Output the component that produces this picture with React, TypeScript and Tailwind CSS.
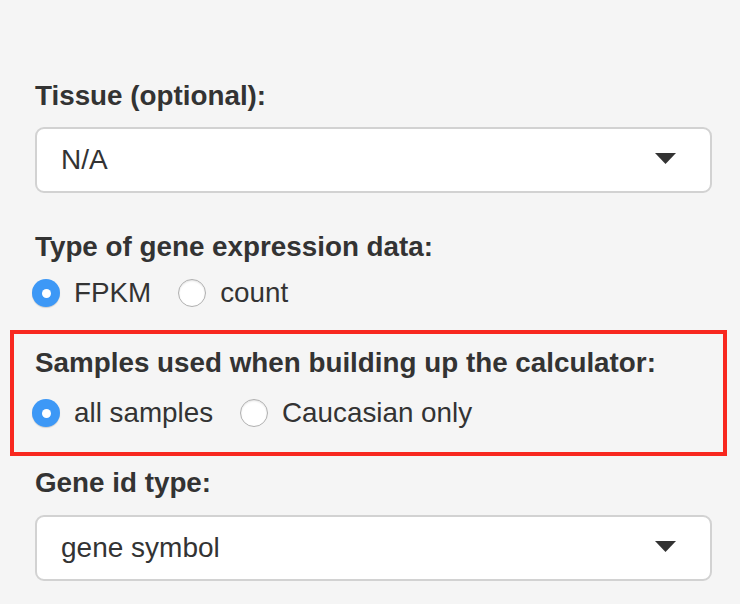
function Caret() {
  return (
    <svg width="21" height="11" viewBox="0 0 21 11" className="-mt-[3px]">
      <path d="M0 0 L21 0 L10.5 11 Z" fill="#333" />
    </svg>
  )
}

function Select({ value }: { value: string }) {
  return (
    <div className="h-[66px] bg-white border-2 border-[#d2d2d2] rounded-[9px] flex items-center justify-between pl-[24px] pr-[34px] text-[28px]">
      <span>{value}</span>
      <Caret />
    </div>
  )
}

function Radio({ label, checked }: { label: string; checked?: boolean }) {
  return (
    <div className="flex items-center gap-[14px]">
      {checked ? (
        <span className="w-[28px] h-[28px] rounded-full bg-[#3d98f6] flex items-center justify-center shadow-[0_1px_1px_rgba(0,0,0,0.15)]">
          <span className="w-[9px] h-[9px] rounded-full bg-white" />
        </span>
      ) : (
        <span className="w-[28px] h-[28px] rounded-full bg-white border border-[#b0b0b0] shadow-[inset_0_1px_2px_rgba(0,0,0,0.12)]" />
      )}
      <span className="text-[27.8px]">{label}</span>
    </div>
  )
}

function Label({ children }: { children: React.ReactNode }) {
  return <div className="font-bold text-[27.8px] leading-[40px]">{children}</div>
}

export default function App() {
  return (
    <div className="min-h-screen bg-[#f5f5f5] text-[#333] font-['Liberation_Sans',Arial,sans-serif] pt-[76px]">
      <div className="ml-[35px] w-[677px]">
        <Label>Tissue (optional):</Label>
        <div className="mt-[11px]">
          <Select value="N/A" />
        </div>

        <div className="mt-[34px]">
          <Label>Type of gene expression data:</Label>
        </div>
        <div className="mt-[6px] h-[40px] flex items-center gap-[27px] -ml-[3px]">
          <Radio label="FPKM" checked />
          <Radio label="count" />
        </div>

        <div className="mt-[17px] -ml-[25px] -mr-[15px] border-4 border-[#f8281f] pt-[9px] pb-[19px] pl-[21px]">
          <Label>Samples used when building up the calculator:</Label>
          <div className="mt-[10px] h-[40px] flex items-center gap-[27px] -ml-[3px]">
            <Radio label="all samples" checked />
            <Radio label="Caucasian only" />
          </div>
        </div>

        <div className="mt-[7px]">
          <Label>Gene id type:</Label>
        </div>
        <div className="mt-[12px]">
          <Select value="gene symbol" />
        </div>
      </div>
    </div>
  )
}
